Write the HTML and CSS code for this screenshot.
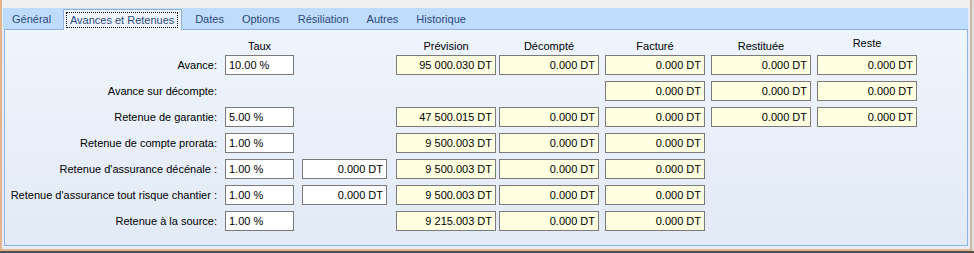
FILE: index.html
```html
<!DOCTYPE html>
<html lang="fr">
<head>
    <meta charset="UTF-8">
    <title>Avances et Retenues</title>
    <link rel="stylesheet" href="styles.css">
</head>
<body>
    <div class="window">
        <!-- Tabs -->
        <div class="tabs">
            <div class="tab">Général</div>
            <div class="tab active"><span>Avances et Retenues</span></div>
            <div class="tab">Dates</div>
            <div class="tab">Options</div>
            <div class="tab">Résiliation</div>
            <div class="tab">Autres</div>
            <div class="tab">Historique</div>
        </div>

        <!-- Avances et Retenues -->
        <div class="panel">
            <div class="row heads">
                <div class="head c-taux">Taux</div>
                <div class="head c-prev">Prévision</div>
                <div class="head c-dec">Décompté</div>
                <div class="head c-fac">Facturé</div>
                <div class="head c-res">Restituée</div>
                <div class="head c-reste up">Reste</div>
            </div>

            <div class="rows">
                <div class="row">
                    <label class="lbl">Avance:</label>
                    <input class="fld c-taux" value="10.00 %">
                    <input class="fld num ro c-prev" value="95 000.030 DT" readonly>
                    <input class="fld num ro c-dec" value="0.000 DT" readonly>
                    <input class="fld num ro c-fac" value="0.000 DT" readonly>
                    <input class="fld num ro c-res" value="0.000 DT" readonly>
                    <input class="fld num ro c-reste" value="0.000 DT" readonly>
                </div>
                <div class="row">
                    <label class="lbl">Avance sur décompte:</label>
                    <input class="fld num ro c-fac" value="0.000 DT" readonly>
                    <input class="fld num ro c-res" value="0.000 DT" readonly>
                    <input class="fld num ro c-reste" value="0.000 DT" readonly>
                </div>
                <div class="row">
                    <label class="lbl">Retenue de garantie:</label>
                    <input class="fld c-taux" value="5.00 %">
                    <input class="fld num ro c-prev" value="47 500.015 DT" readonly>
                    <input class="fld num ro c-dec" value="0.000 DT" readonly>
                    <input class="fld num ro c-fac" value="0.000 DT" readonly>
                    <input class="fld num ro c-res" value="0.000 DT" readonly>
                    <input class="fld num ro c-reste" value="0.000 DT" readonly>
                </div>
                <div class="row">
                    <label class="lbl">Retenue de compte prorata:</label>
                    <input class="fld c-taux" value="1.00 %">
                    <input class="fld num ro c-prev" value="9 500.003 DT" readonly>
                    <input class="fld num ro c-dec" value="0.000 DT" readonly>
                    <input class="fld num ro c-fac" value="0.000 DT" readonly>
                </div>
                <div class="row">
                    <label class="lbl">Retenue d'assurance décénale :</label>
                    <input class="fld c-taux" value="1.00 %">
                    <input class="fld num c-amt" value="0.000 DT">
                    <input class="fld num ro c-prev" value="9 500.003 DT" readonly>
                    <input class="fld num ro c-dec" value="0.000 DT" readonly>
                    <input class="fld num ro c-fac" value="0.000 DT" readonly>
                </div>
                <div class="row">
                    <label class="lbl">Retenue d'assurance tout risque chantier :</label>
                    <input class="fld c-taux" value="1.00 %">
                    <input class="fld num c-amt" value="0.000 DT">
                    <input class="fld num ro c-prev" value="9 500.003 DT" readonly>
                    <input class="fld num ro c-dec" value="0.000 DT" readonly>
                    <input class="fld num ro c-fac" value="0.000 DT" readonly>
                </div>
                <div class="row">
                    <label class="lbl">Retenue à la source:</label>
                    <input class="fld c-taux" value="1.00 %">
                    <input class="fld num ro c-prev" value="9 215.003 DT" readonly>
                    <input class="fld num ro c-dec" value="0.000 DT" readonly>
                    <input class="fld num ro c-fac" value="0.000 DT" readonly>
                </div>
            </div>
        </div>
    </div>
    <div class="statusbar"></div>
</body>
</html>
```

FILE: styles.css
```css
/* Window frame */
body {
    margin: 0;
    background-color: #dedede;
    font-family: "Liberation Sans", Arial, sans-serif;
    font-size: 11px;
    color: #000;
}

.window {
    width: 968px;
    height: 241px;
    padding-top: 8px;
    border-left: 2px solid #e4b48c;
    border-right: 2px solid #cbb7a6;
    border-bottom: 2px solid #e4b48c;
    background: linear-gradient(#f0f0f0 8px, #e6edf8 8px);
}

.statusbar {
    width: 974px;
    height: 2px;
    background-color: #4e4e4e;
}

/* Tabs */
.tabs {
    display: flex;
    height: 21px;
    margin: 0 2px 0 1px;
    background-color: #bfdcfd;
}

.tab {
    padding: 2px 9px 0 9px;
    line-height: 19px;
    color: #2c4a7c;
    white-space: nowrap;
}

.tab.active {
    position: relative;
    z-index: 1;
    width: 119px;
    height: 21px;
    box-sizing: border-box;
    margin: 1px 4px 0 3px;
    padding: 0;
    border: 1px solid #8fb4e3;
    border-bottom: none;
    background-color: #eff5fe;
}

.tab.active span {
    display: block;
    height: 16px;
    box-sizing: border-box;
    margin: 2px 3px 0 2px;
    border: 1px dotted #000;
    line-height: 14px;
    text-align: center;
}

/* Panel */
.panel {
    height: 217px;
    box-sizing: border-box;
    margin: 0 2px;
    border: 1px solid #8fb4e3;
    background: linear-gradient(#eff5fe, #e2eaf6);
}

.row {
    display: grid;
    grid-template-columns: 220px 77px 94px 103px 106px 106px 106px 100px;
    align-items: center;
}

.heads {
    height: 14px;
    margin: 8px 0 3px 0;
    align-items: start;
}

.head {
    text-align: center;
    line-height: 14px;
    padding-top: 1px;
}

.head.up {
    padding-top: 0;
    margin-top: -2px;
}

.rows {
    display: flex;
    flex-direction: column;
    gap: 6px;
}

.lbl {
    grid-column: 1;
    padding-right: 8px;
    text-align: right;
    white-space: nowrap;
}

/* Fields */
.fld {
    height: 20px;
    box-sizing: border-box;
    padding: 0 3px;
    border: 1px solid #7a7a7a;
    background-color: #fff;
    font-family: inherit;
    font-size: 11px;
    color: #000;
    outline: none;
}

.fld.num {
    text-align: right;
}

.fld.ro {
    background-color: #ffffe1;
}

.c-taux { grid-column: 2; width: 69px; }
.c-amt { grid-column: 3; width: 85px; }
.c-prev { grid-column: 4; width: 100px; }
.c-dec { grid-column: 5; width: 100px; }
.c-fac { grid-column: 6; width: 100px; }
.c-res { grid-column: 7; width: 100px; }
.c-reste { grid-column: 8; width: 100px; }
```
